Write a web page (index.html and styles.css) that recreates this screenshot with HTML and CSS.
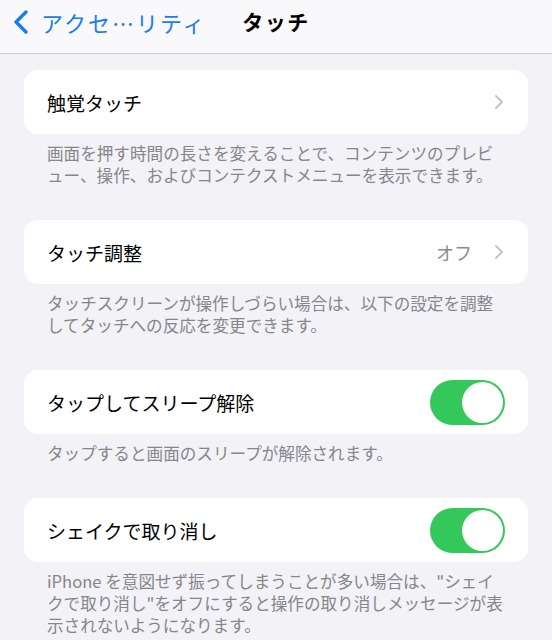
FILE: index.html
```html
<!DOCTYPE html>
<html>
<head>
  <title>タッチ</title>
<link rel="stylesheet" href="styles.css"></head>
<body>
  <div class="navbar">
    <a class="back" href="#">
      <svg class="back-icon" width="18" height="24" viewBox="0 0 18 24">
        <path d="M14 2 L4 12 L14 22" fill="none" stroke="#1a7cf5" stroke-width="3.4" stroke-linecap="round" stroke-linejoin="round"/>
      </svg>
      <span>アクセ…リティ</span>
    </a>
    <h1 class="title">タッチ</h1>
  </div>

  <div class="content">
    <div class="group">
      <div class="cell">
        <span class="cell-label">触覚タッチ</span>
        <span class="cell-right">
          <svg class="chevron" width="10" height="16" viewBox="0 0 10 16"><path d="M2 2 L8 8 L2 14" fill="none" stroke="#c4c4c7" stroke-width="2" stroke-linecap="round" stroke-linejoin="round"/></svg>
        </span>
      </div>
      <p class="footer">画面を押す時間の長さを変えることで、コンテンツのプレビュー、操作、およびコンテクストメニューを表示できます。</p>
    </div>

    <div class="group">
      <div class="cell">
        <span class="cell-label">タッチ調整</span>
        <span class="cell-right">
          <span class="cell-value">オフ</span>
          <svg class="chevron" width="10" height="16" viewBox="0 0 10 16"><path d="M2 2 L8 8 L2 14" fill="none" stroke="#c4c4c7" stroke-width="2" stroke-linecap="round" stroke-linejoin="round"/></svg>
        </span>
      </div>
      <p class="footer">タッチスクリーンが操作しづらい場合は、以下の設定を調整してタッチへの反応を変更できます。</p>
    </div>

    <div class="group">
      <div class="cell">
        <span class="cell-label">タップしてスリープ解除</span>
        <span class="toggle on"><span class="knob"></span></span>
      </div>
      <p class="footer">タップすると画面のスリープが解除されます。</p>
    </div>

    <div class="group">
      <div class="cell">
        <span class="cell-label">シェイクで取り消し</span>
        <span class="toggle on"><span class="knob"></span></span>
      </div>
      <p class="footer">iPhone を意図せず振ってしまうことが多い場合は、"シェイ<br>クで取り消し"をオフにすると操作の取り消しメッセージが表示されないようになります。</p>
    </div>
  </div>
</body>
</html>
```

FILE: styles.css
```css
body {
    margin: 0;
    background-color: #f2f2f7;
    font-family: "Noto Sans CJK JP", "Noto Sans", sans-serif;
    color: #000;
  }

  .navbar {
    position: relative;
    height: 53px;
    background-color: #f9f9fb;
    border-bottom: 1px solid #cfcfd3;
    display: flex;
    align-items: center;
    justify-content: center;
  }

  .back {
    position: absolute;
    left: 12px;
    top: 10px;
    display: flex;
    align-items: center;
    gap: 11px;
    color: #1a7cf5;
    text-decoration: none;
    font-size: 22px;
    line-height: 24px;
    letter-spacing: 2px;
  }

  .back-icon {
    display: block;
  }

  .title {
    margin: 0 0 12px 0;
    font-size: 21px;
    font-weight: bold;
    letter-spacing: 1.5px;
  }

  .content {
    padding: 16px 24px 0 24px;
  }

  .group {
    margin-bottom: 34px;
  }

  .cell {
    height: 64px;
    background-color: #fff;
    border-radius: 14px;
    padding: 0 23px;
    display: flex;
    align-items: center;
    justify-content: space-between;
  }

  .cell-label {
    font-size: 19px;
  }

  .cell-right {
    display: flex;
    align-items: center;
    gap: 22px;
    margin-right: 1px;
  }

  .cell-value {
    color: #8a8a8e;
    font-size: 18px;
  }

  .chevron {
    display: block;
  }

  .toggle {
    width: 75px;
    height: 45px;
    border-radius: 23px;
    background-color: #e9e9eb;
    padding: 2px;
    box-sizing: border-box;
    display: flex;
  }

  .toggle.on {
    background-color: #34c759;
    justify-content: flex-end;
  }

  .knob {
    width: 41px;
    height: 41px;
    border-radius: 50%;
    background-color: #fff;
  }

  .footer {
    margin: 0;
    padding: 8px 23px 0 23px;
    font-size: 16.6px;
    line-height: 22px;
    color: #86868b;
  }
```
